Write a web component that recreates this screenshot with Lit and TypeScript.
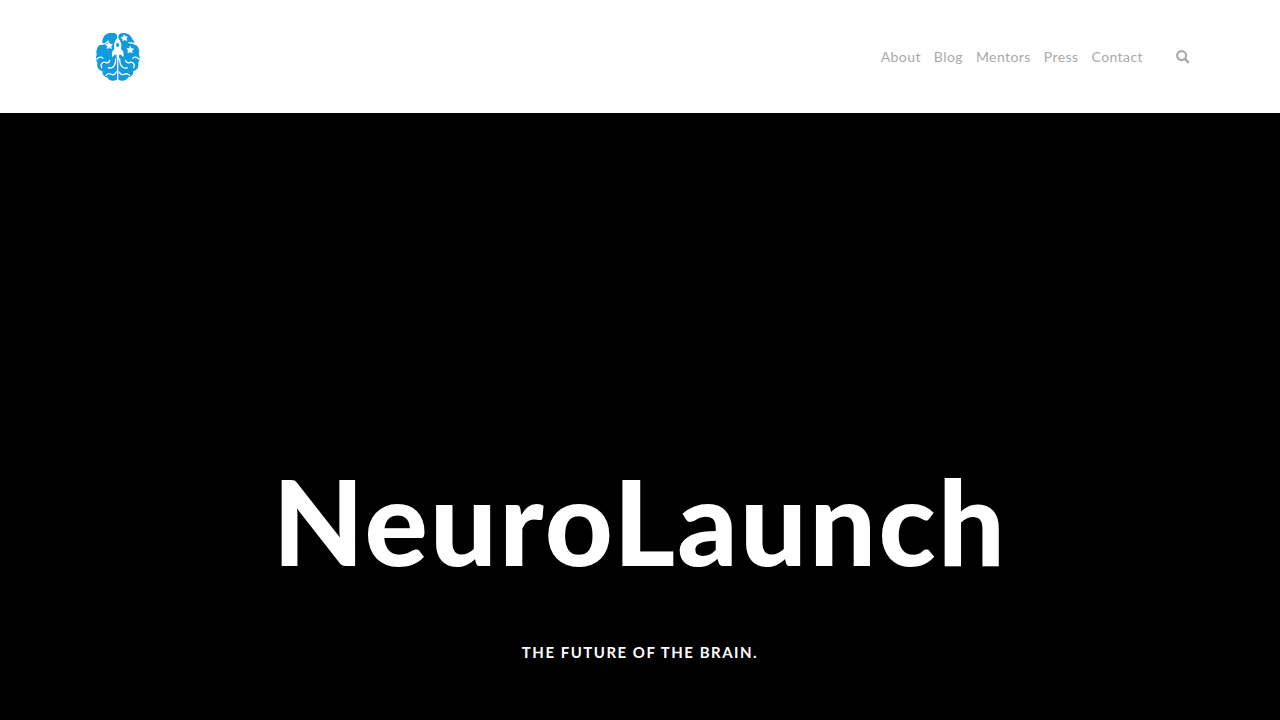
import { LitElement, html, css } from "lit";
import { customElement } from "lit/decorators.js";

const links = ["About", "Blog", "Mentors", "Press", "Contact"];

@customElement("app-root")
export class AppRoot extends LitElement {
  static styles = css`
    :host {
      display: flex;
      flex-direction: column;
      min-height: 100vh;
      box-sizing: border-box;
      background: #000;
      font-family: Lato, "Open Sans", sans-serif;
    }
    .header {
      display: flex;
      align-items: center;
      justify-content: space-between;
      padding: 32px 90px 31px 95px;
      background: #fff;
    }
    .logo,
    .logo svg,
    .search svg {
      display: block;
    }
    .right {
      display: flex;
      align-items: center;
      gap: 33px;
    }
    .nav {
      display: flex;
      gap: 13px;
    }
    .nav a {
      color: #aaa;
      font-size: 14px;
      line-height: 24px;
      letter-spacing: 0.03em;
      text-decoration: none;
    }
    .search {
      padding: 0;
      border: 0;
      background: none;
      cursor: pointer;
    }
    .hero {
      flex: 1;
      display: flex;
      flex-direction: column;
      align-items: center;
      justify-content: flex-end;
      gap: 48px;
      padding: 0 24px 56px;
      color: #fff;
      text-align: center;
    }
    .title {
      margin: 0;
      font-size: 118px;
      line-height: 142px;
      font-weight: 900;
      letter-spacing: 0.02em;
    }
    .tagline {
      margin: 0;
      font-size: 15px;
      line-height: 24px;
      font-weight: 700;
      letter-spacing: 0.1em;
      text-transform: uppercase;
    }
  `;

  render() {
    return html`
      <header class="header">
        <a class="logo" href="#" aria-label="NeuroLaunch">
          <svg width="46" height="50" viewBox="14 11 138 151" fill="none" stroke-linecap="round" stroke-linejoin="round">
            <path fill="#129bdc" d="M80 24C80 16 74 13 66 14C52 13 41 19 37 32C35 38 35 42 38 47C27 47 20 55 19 65C17 69 17 74 19 78C15 87 16 98 21 104C18 117 24 127 36 129C35 140 42 147 50 148C57 161 73 161 82 153C91 161 107 161 114 148C123 147 130 140 129 129C141 127 147 117 144 104C149 98 150 87 146 78C149 66 145 54 134 48C133 41 130 38 127 34C122 18 107 12 94 15C88 15 85 18 85 24Z"/>
            <path stroke="#fff" stroke-width="4" d="M82 12V34M82 82V160M29 48C40 48 49 46 53 38M136 49C129 42 122 45 116 43M76 92C76 115 66 122 54 119M88 92C88 115 99 123 111 119M78 132C74 140 68 141 63 139C56 135 50 138 47 142M87 132C90 140 96 141 101 139C108 135 114 138 118 142M58 97C55 106 48 105 42 102M42 102C32 103 30 112 34 119M106 97C109 106 117 105 122 102M122 102C132 103 134 112 130 119M19 93C25 84 34 86 37 90M146 93C140 84 131 86 128 90"/>
            <path fill="#fff" d="M82 28C71 38 70 51 72 62C64 68 64 77 66 87L73 80L78 79L80 96H85L87 79L92 80L99 87C101 77 101 68 92 62C95 51 93 38 82 28Z"/>
            <ellipse cx="82" cy="50" rx="5" ry="6" fill="#129bdc"/>
            <path fill="#fff" stroke="#fff" stroke-width="2" d="M55 42L59 48L66 48L62 54L63 61L56 58L50 61L51 54L46 48L53 48ZM101 20L105 25L111 25L108 31L110 37L103 34L98 38L98 32L92 28L99 26ZM120 55L123 61L130 62L125 67L126 74L119 71L113 74L114 67L110 61L117 61Z"/>
          </svg>
        </a>
        <div class="right">
          <nav class="nav">${links.map((l) => html`<a href="#">${l}</a>`)}</nav>
          <button class="search" type="button" aria-label="Search">
            <svg width="14" height="14" viewBox="0 0 14 14" fill="none" stroke="#aaa">
              <circle cx="5.6" cy="5.6" r="4.5" stroke-width="2.1"/>
              <path d="M9.2 9.2L12.1 12.1" stroke-width="2.5" stroke-linecap="round"/>
            </svg>
          </button>
        </div>
      </header>
      <main class="hero">
        <h1 class="title">NeuroLaunch</h1>
        <p class="tagline">The future of the brain.</p>
      </main>
    `;
  }
}
